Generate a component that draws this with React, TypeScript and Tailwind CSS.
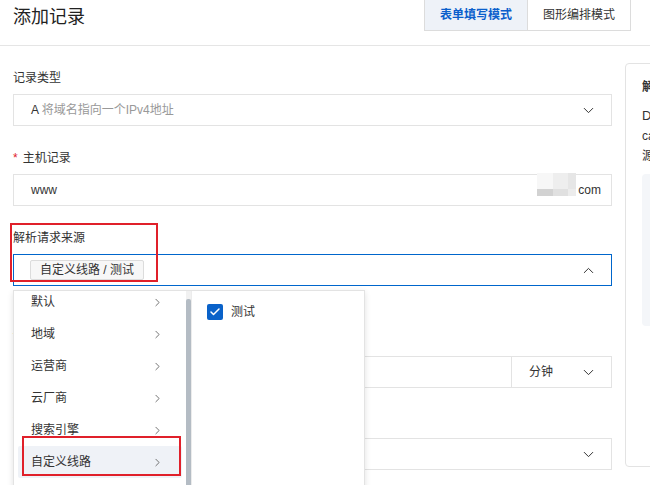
import React from 'react'
import { ChevronDown, ChevronUp, ChevronRight, Check } from 'lucide-react'

const menuItems = ['默认', '地域', '运营商', '云厂商', '搜索引擎', '自定义线路']

function Label({ children, required }: { children: React.ReactNode; required?: boolean }) {
  return (
    <div className="flex h-5 items-center text-[12px] text-[#333]">
      {required && <span className="mr-[5px] text-[#e0202a]">*</span>}
      {children}
    </div>
  )
}

function Blur() {
  // pixelated masked domain
  return (
    <div className="mr-[2px] grid grid-cols-[16px_15px_8px] grid-rows-[16px_7px] self-end pb-[9px]">
      <div className="bg-[#f7f7f7]" />
      <div className="bg-[#eeeeee]" />
      <div className="bg-[#e6e6e6]" />
      <div className="bg-[#d2d2d2]" />
      <div className="bg-[#e0e0e0]" />
      <div className="bg-[#ececec]" />
    </div>
  )
}

export default function App() {
  return (
    <div className="h-[485px] w-[650px] overflow-hidden bg-white font-['Liberation_Sans','Noto_Sans_CJK_SC',sans-serif] text-[#333]">
      <div className="flex h-[46px] items-start justify-between border-b border-[#e5e5e5] pl-[13px] pr-[19px]">
        <h1 className="pt-[4px] text-[18px] leading-[26px] text-[#222]">添加记录</h1>
        <div className="mt-[-1px] flex h-[32px] border border-[#dcdcdc] text-[12px]">
          <button className="w-[103px] border-r border-[#dcdcdc] bg-[#eef2f8] font-bold text-[#0b5fcc]">
            表单填写模式
          </button>
          <button className="w-[102px] bg-white text-[#333]">图形编排模式</button>
        </div>
      </div>

      <div className="flex gap-[13px] pl-[13px]">
        <div className="relative w-[599px] shrink-0">
          <div className="mt-[22px]">
            <Label>记录类型</Label>
            <div className="mt-[6px] flex h-[32px] items-center justify-between border border-[#e3e3e3] pl-[17px] pr-[14px] text-[12px]">
              <span>
                <span className="text-[#333]">A</span>{' '}
                <span className="text-[#999]">将域名指向一个IPv4地址</span>
              </span>
              <ChevronDown size={17} strokeWidth={1.4} className="text-[#333]" />
            </div>
          </div>

          <div className="mt-[22px]">
            <Label required>主机记录</Label>
            <div className="mt-[6px] flex h-[32px] items-center justify-between border border-[#e3e3e3] pl-[17px] pr-[10px] text-[12px]">
              <span className="text-[#333]">www</span>
              <div className="flex h-full items-center">
                <Blur />
                <span className="text-[12px] text-[#333]">com</span>
              </div>
            </div>
          </div>

          <div className="relative mt-[22px]">
            <Label>解析请求来源</Label>
            <div className="mt-[6px] flex h-[32px] items-center justify-between border border-[#0066cc] pl-[16px] pr-[14px] text-[12px]">
              <span className="flex h-[20px] items-center rounded-[2px] border border-[#dcdcdc] bg-[#f7f7f7] px-[9px] text-[#333]">
                自定义线路 / 测试
              </span>
              <ChevronUp size={17} strokeWidth={1.4} className="text-[#333]" />
            </div>

            <div className="absolute left-[-3px] top-[-5px] h-[59px] w-[148px] border-2 border-[#e0202a]" />

            <div className="absolute left-0 top-[62px] z-10 flex h-[210px] w-[352px] border border-[#e3e3e3] bg-white shadow-[0_2px_6px_rgba(0,0,0,0.12)]">
              <div className="relative w-[172px] overflow-hidden">
                <div className="mt-[-5px] flex flex-col">
                  {menuItems.map((item, i) => (
                    <div
                      key={i}
                      className={
                        i === menuItems.length - 1
                          ? 'relative mx-[4px] flex h-[32px] items-center justify-between rounded-[2px] bg-[#eff2f7] pl-[13px] pr-[18px] text-[12px] text-[#333]'
                          : 'mx-[4px] flex h-[32px] items-center justify-between pl-[13px] pr-[18px] text-[12px] text-[#333]'
                      }
                    >
                      {item}
                      <ChevronRight size={13} strokeWidth={1.5} className="text-[#555]" />
                      {i === menuItems.length - 1 && (
                        <div className="absolute left-[4px] top-[-10px] h-[40px] w-[159px] border-2 border-[#e0202a]" />
                      )}
                    </div>
                  ))}
                </div>
              </div>
              <div className="flex w-[5px] flex-col bg-[#f1f1f1] pt-[8px]">
                <div className="flex-1 rounded-t-[2px] bg-[#b4bcc4]" />
              </div>
              <div className="flex-1 border-l border-[#ececec] pl-[15px] pt-[12px]">
                <div className="flex items-center gap-[8px] text-[12px] text-[#333]">
                  <span className="flex h-[16px] w-[16px] items-center justify-center rounded-[2px] bg-[#0a62c9]">
                    <Check size={12} strokeWidth={3} className="text-white" />
                  </span>
                  测试
                </div>
              </div>
            </div>
          </div>

          <div className="mt-[42px]">
            <Label>TTL</Label>
            <div className="mt-[8px] flex h-[32px] border border-[#e3e3e3] text-[12px]">
              <div className="flex-1" />
              <div className="flex w-[100px] items-center justify-between border-l border-[#e3e3e3] pl-[17px] pr-[14px]">
                分钟
                <ChevronDown size={17} strokeWidth={1.4} className="text-[#333]" />
              </div>
            </div>
          </div>

          <div className="mt-[22px]">
            <Label>记录值</Label>
            <div className="mt-[8px] flex h-[32px] items-center justify-end border border-[#e3e3e3] pr-[14px]">
              <ChevronDown size={17} strokeWidth={1.4} className="text-[#333]" />
            </div>
          </div>
        </div>

        <div className="mt-[17px] h-[404px] w-[260px] shrink-0 overflow-hidden rounded-[4px] border border-[#e3e3e3] pl-[16px] pr-[16px] pt-[14px]">
          <div className="text-[12px] font-bold leading-[18px] text-[#333]">解析请求来源说明</div>
          <div className="mt-[10px] text-[12px] leading-[20px] text-[#333]">
            <div className="text-[13px]">DNS 服务器根据请求来源返回结果</div>
            <div>can be configured by custom line</div>
            <div>源 IP 地址段可自定义线路</div>
          </div>
          <div className="mt-[8px] h-[152px] rounded-[4px] bg-[#f4f6f9]" />
        </div>
      </div>
    </div>
  )
}
